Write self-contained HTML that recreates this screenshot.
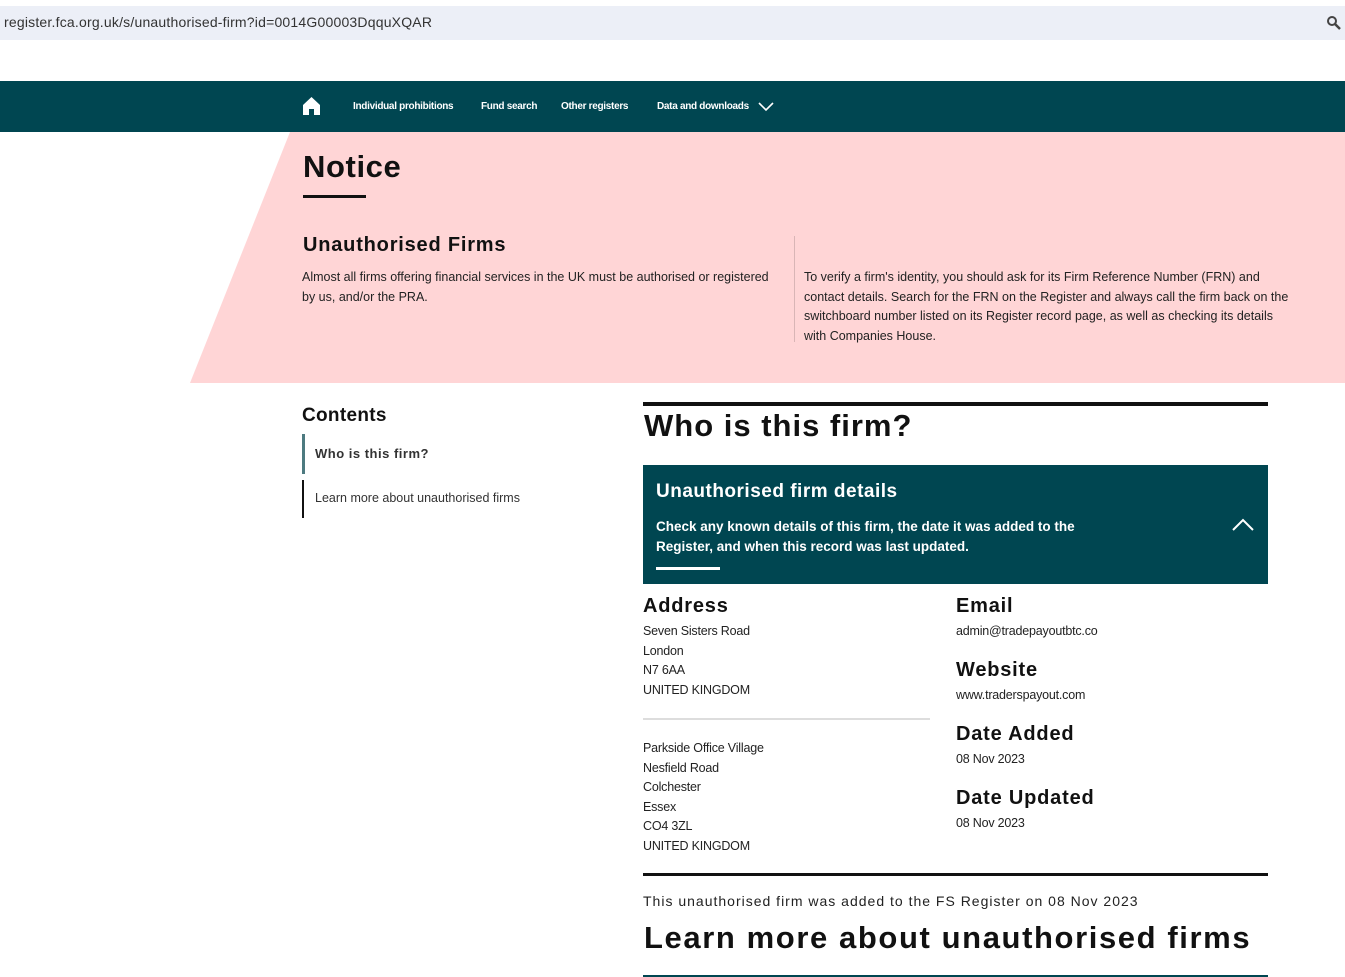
<!DOCTYPE html>
<html><head><meta charset="utf-8"><style>
*{margin:0;padding:0;box-sizing:border-box}
body{width:1345px;height:977px;overflow:hidden;background:#fff;font-family:"Liberation Sans",sans-serif;color:#111;position:relative}
.a{position:absolute;white-space:nowrap}
.url{position:absolute;left:0;top:6px;width:1345px;height:34px;background:#eceff7}
.nav{position:absolute;left:0;top:81px;width:1345px;height:51px;background:#004651}
.nav span{position:absolute;top:20px;color:#fff;font-size:10px;font-weight:bold;letter-spacing:-0.3px}
.pink{position:absolute;left:0;top:132px;width:1345px;height:251px;background:#ffd5d6;clip-path:polygon(290px 0,1345px 0,1345px 251px,190px 251px)}
.b{font-weight:bold}
.t13{font-size:12.5px;line-height:19.5px;color:#222;letter-spacing:-0.2px}
</style></head><body>
<div class="url"></div>
<div class="a" style="left:4px;top:14px;font-size:14px;color:#333;letter-spacing:0.2px">register.fca.org.uk/s/unauthorised-firm?id=0014G00003DqquXQAR</div>
<svg class="a" style="left:1326px;top:15px" width="15" height="15" viewBox="0 0 15 15"><circle cx="6" cy="6" r="4" fill="none" stroke="#444" stroke-width="2"/><path d="M9 9l5 5" stroke="#444" stroke-width="2.5"/></svg>
<div class="nav">
<svg style="position:absolute;left:303px;top:16px" width="17" height="18" viewBox="0 0 17 18"><path d="M8.5 0L0 8v10h6v-6h5v6h6V8z" fill="#fff"/></svg>
<span style="left:353px">Individual prohibitions</span>
<span style="left:481px">Fund search</span>
<span style="left:561px">Other registers</span>
<span style="left:657px">Data and downloads</span>
<svg style="position:absolute;left:758px;top:21px" width="16" height="10" viewBox="0 0 16 10"><path d="M1 1l7 7 7-7" fill="none" stroke="#fff" stroke-width="1.6"/></svg>
</div>
<div class="pink"></div>
<div class="a b" style="left:303px;top:149px;font-size:31px;letter-spacing:0.6px">Notice</div>
<div class="a" style="left:303px;top:195px;width:63px;height:3px;background:#111"></div>
<div class="a b" style="left:303px;top:234px;font-size:20px;letter-spacing:0.8px">Unauthorised Firms</div>
<div class="a t13" style="left:302px;top:268px;letter-spacing:0px">Almost all firms offering financial services in the UK must be authorised or registered<br>by us, and/or the PRA.</div>
<div class="a" style="left:794px;top:236px;width:1px;height:106px;background:#d9b5b6"></div>
<div class="a t13" style="left:804px;top:268px;letter-spacing:0px">To verify a firm's identity, you should ask for its Firm Reference Number (FRN) and<br>contact details. Search for the FRN on the Register and always call the firm back on the<br>switchboard number listed on its Register record page, as well as checking its details<br>with Companies House.</div>
<div class="a b" style="left:302px;top:405px;font-size:19px;letter-spacing:0.3px">Contents</div>
<div class="a" style="left:302px;top:434px;width:3px;height:40px;background:#4d7a80"></div>
<div class="a b" style="left:315px;top:446px;font-size:13px;color:#333;letter-spacing:0.5px">Who is this firm?</div>
<div class="a" style="left:302px;top:480px;width:2px;height:38px;background:#111"></div>
<div class="a" style="left:315px;top:491px;font-size:12.5px;color:#333;letter-spacing:0px">Learn more about unauthorised firms</div>
<div class="a" style="left:643px;top:402px;width:625px;height:4px;background:#111"></div>
<div class="a b" style="left:644px;top:408px;font-size:31px;letter-spacing:1px">Who is this firm?</div>
<div class="a" style="left:643px;top:465px;width:625px;height:119px;background:#004651"></div>
<div class="a b" style="left:656px;top:481px;font-size:19px;color:#fff;letter-spacing:0.5px">Unauthorised firm details</div>
<div class="a b" style="left:656px;top:517px;font-size:13.5px;line-height:19.5px;color:#fff;letter-spacing:0px">Check any known details of this firm, the date it was added to the<br>Register, and when this record was last updated.</div>
<div class="a" style="left:656px;top:567px;width:64px;height:3px;background:#fff"></div>
<svg class="a" style="left:1232px;top:518px" width="22" height="13" viewBox="0 0 22 13"><path d="M1 12L11 2l10 10" fill="none" stroke="#fff" stroke-width="2"/></svg>
<div class="a b" style="left:643px;top:595px;font-size:20px;letter-spacing:0.8px">Address</div>
<div class="a t13" style="left:643px;top:622px">Seven Sisters Road<br>London<br>N7 6AA<br>UNITED KINGDOM</div>
<div class="a" style="left:643px;top:718px;width:287px;height:2px;background:#ddd"></div>
<div class="a t13" style="left:643px;top:739px">Parkside Office Village<br>Nesfield Road<br>Colchester<br>Essex<br>CO4 3ZL<br>UNITED KINGDOM</div>
<div class="a b" style="left:956px;top:595px;font-size:20px;letter-spacing:0.8px">Email</div>
<div class="a t13" style="left:956px;top:622px">admin@tradepayoutbtc.co</div>
<div class="a b" style="left:956px;top:659px;font-size:20px;letter-spacing:0.8px">Website</div>
<div class="a t13" style="left:956px;top:686px">www.traderspayout.com</div>
<div class="a b" style="left:956px;top:723px;font-size:20px;letter-spacing:0.8px">Date Added</div>
<div class="a t13" style="left:956px;top:750px">08 Nov 2023</div>
<div class="a b" style="left:956px;top:787px;font-size:20px;letter-spacing:0.8px">Date Updated</div>
<div class="a t13" style="left:956px;top:814px">08 Nov 2023</div>
<div class="a" style="left:643px;top:873px;width:625px;height:3px;background:#111"></div>
<div class="a" style="left:643px;top:893px;font-size:14px;letter-spacing:1px;color:#222">This unauthorised firm was added to the FS Register on 08 Nov 2023</div>
<div class="a b" style="left:644px;top:920px;font-size:31px;letter-spacing:1.6px">Learn more about unauthorised firms</div>
<div class="a" style="left:643px;top:975px;width:625px;height:2px;background:#004651"></div>
</body></html>
